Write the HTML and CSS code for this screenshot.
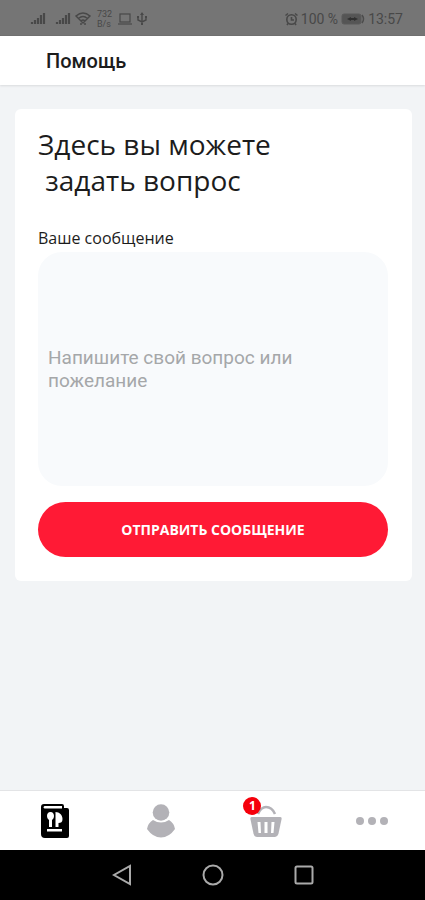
FILE: index.html
```html
<!DOCTYPE html>
<html lang="ru">
<head>
<meta charset="utf-8">
<meta name="viewport" content="width=device-width, initial-scale=1">
<title>Помощь</title>
<link rel="stylesheet" href="styles.css">
</head>
<body>
<div class="status">
  <div class="status-group">
    <svg width="17" height="16" viewBox="0 0 17 16"><path d="M2 13v-2M5 13v-4M8 13V7M11 13V4M14 13V2" stroke="currentColor" stroke-width="2.200"/></svg>
    <svg class="signal-second" width="17" height="16" viewBox="0 0 17 16"><path d="M2 13v-2M5 13v-4M8 13V7M11 13V4M14 13V2" stroke="currentColor" stroke-width="2.200"/></svg>
    <svg width="16" height="16" viewBox="0 0 16 16" fill="none" stroke="currentColor" stroke-width="1.500"><path d="M1 5Q8-1 15 5L8 12zM3.500 7.500Q8 3.500 12.500 7.500M6 10Q8 8 10 10"/><path d="M6 12v2M10 12v2"/></svg>
    <div class="speed"><span>732</span><span>B/s</span></div>
    <svg width="14" height="16" viewBox="0 0 14 16" fill="none" stroke="currentColor" stroke-width="1.200"><rect x="2" y="3" width="10" height="8"/><path d="M0 13h14"/></svg>
    <svg class="usb" width="10" height="16" viewBox="0 0 10 16" fill="none" stroke="currentColor" stroke-width="1.400"><path d="M5 3v10M1 6v3l4 2 4-2V6"/><path d="M5 1l2 3H3zM0 5h2v2H0zM8 5h2v2H8zM4 12h2v2H4z" fill="currentColor" stroke="none"/></svg>
  </div>
  <div class="status-group status-right">
    <svg width="13" height="14" viewBox="0 0 13 14" fill="none" stroke="currentColor" stroke-width="1.600"><circle cx="6.500" cy="7.500" r="4.700"/><path d="M.5 3.500L3 1.500M12.500 3.500L10 1.500M6.500 5v3H9M3 11.500l-1 1.500M10 11.500l1 1.500"/></svg>
    <span>100 %</span>
    <svg class="battery" width="24" height="12" viewBox="0 0 24 12"><rect x="1" y="1" width="19" height="10" rx="2" fill="#555" stroke="#5a5a5a"/><path d="M21 2q3 4 0 8" fill="none" stroke="#4c4c4c" stroke-width="1.500"/><path d="M6 6l4-2v1h3V4l4 2-4 2V7h-3v1z" fill="#303030"/></svg>
    <span>13:57</span>
  </div>
</div>
<header class="header"><h1>Помощь</h1></header>
<main class="main">
  <form class="card">
    <h2>Здесь вы можете<br>&nbsp;задать вопрос</h2>
    <label for="message">Ваше сообщение</label>
    <textarea id="message" placeholder="Напишите свой вопрос или пожелание"></textarea>
    <button class="submit" type="button">ОТПРАВИТЬ СООБЩЕНИЕ</button>
  </form>
</main>
<nav class="tabs">
  <a href="#menu" aria-label="Меню">
    <svg width="28" height="34" viewBox="0 0 28 34"><path d="M3 0h18q2 0 2 2v2h3q2 0 2 2v26q0 2-2 2H4q-4 0-4-4V3q0-3 3-3z" fill="#000"/><path d="M3.500 2H21v2.500H3.500q-2-1.200 0-2.500z" fill="#fff"/><path d="M6 25h15v2.500H6zM9.500 8C12 8 13 10 13 12c0 2-1 3-2 4v7H8v-7c-1-1-2-2-2-4 0-2 1-4 3.500-4zM14.500 8c4 0 7 3 7 7 0 3-1.500 4-4 4v4h-3z" fill="#fff"/></svg>
  </a>
  <a href="#profile" aria-label="Профиль">
    <svg width="28" height="34" viewBox="0 0 28 34" fill="#b3b2b7"><circle cx="14" cy="8.500" r="8.300"/><path d="M6 16q8 5 16 0 5 3 6 9-6 8.500-14 8.500T0 25q1-6 6-9z"/></svg>
  </a>
  <a href="#cart" aria-label="Корзина">
    <span class="cart">
      <svg width="32" height="34" viewBox="0 0 32 34"><path d="M8 10Q11 3 16 3q6 0 9 7" fill="none" stroke="#b3b2b7" stroke-width="2.500"/><path d="M2 13h28q2 0 1.600 2l-3.200 15q-1 3-3.400 3H7q-2.400 0-3.400-3L.4 15Q0 13 2 13z" fill="#b3b2b7"/><path d="M7.500 18h3l.5 11H8.500zM14.500 18h3v11h-3zM21.500 18h3l-1 11H21z" fill="#fff"/></svg>
      <span class="badge">1</span>
    </span>
  </a>
  <a href="#more" aria-label="Ещё">
    <svg width="32" height="34" viewBox="0 0 32 34" fill="#b3b2b7"><circle cx="4" cy="17" r="4"/><circle cx="16" cy="17" r="4"/><circle cx="28" cy="17" r="4"/></svg>
  </a>
</nav>
<div class="system">
  <button type="button" aria-label="Назад"><svg width="20" height="22" viewBox="0 0 20 22"><path d="M18 2v18L2 11z"/></svg></button>
  <button type="button" aria-label="Домой"><svg width="22" height="22" viewBox="0 0 22 22"><circle cx="11" cy="11" r="9.500"/></svg></button>
  <button type="button" aria-label="Недавние"><svg width="20" height="22" viewBox="0 0 20 22"><rect x="1.500" y="2.500" width="17" height="17" rx="1.500"/></svg></button>
</div>
</body>
</html>
```
FILE: styles.css
```css
* {
  box-sizing: border-box;
}

body {
  margin: 0;
  min-height: 100vh;
  display: flex;
  flex-direction: column;
  background: #f2f4f6;
  color: #1c1c1c;
  font-family: "Open Sans", sans-serif;
}

svg {
  display: block;
  flex: none;
}

.status {
  height: 36px;
  padding: 2px 22px 0 30px;
  display: flex;
  align-items: center;
  justify-content: space-between;
  background: #757575;
  border-bottom: 1px solid #686868;
  color: #484848;
  font: 14px/16px Roboto, sans-serif;
}

.status-group {
  display: flex;
  align-items: center;
  gap: 3px;
}

.signal-second {
  margin-left: 5px;
}

.speed {
  display: flex;
  flex-direction: column;
  margin: 0 3px;
  font-size: 9px;
  line-height: 10px;
}

.usb {
  margin-left: 2px;
}

.header {
  height: 49px;
  padding: 0 46px;
  display: flex;
  align-items: center;
  background: #fff;
  box-shadow: 0 1px 2px #d9dbdd;
}

h1 {
  margin: 0;
  font: 500 20px/24px Roboto, sans-serif;
}

.main {
  flex: 1;
  padding: 24px 13px 24px 15px;
}

.card {
  padding: 17px 24px 24px 23px;
  display: flex;
  flex-direction: column;
  background: #fff;
  border-radius: 6px;
}

h2 {
  margin: 0 0 28px;
  font-size: 28px;
  font-weight: 400;
  line-height: 36px;
}

label {
  font-size: 16px;
  line-height: 24px;
}

textarea {
  height: 234px;
  margin: 2px 0 16px;
  padding: 94px 60px 24px 10px;
  border: 0;
  border-radius: 24px;
  background: #f8fafc;
  color: #1c1c1c;
  font: 19px/23px Roboto, sans-serif;
  resize: none;
}

textarea::placeholder {
  color: #a5a7a9;
}

.submit {
  height: 55px;
  border: 0;
  border-radius: 28px;
  background: #ff1a35;
  color: #fff;
  font: 700 14px/20px "Open Sans", sans-serif;
}

.tabs {
  height: 60px;
  display: grid;
  grid-template-columns: repeat(4, 1fr);
  padding-left: 2px;
  background: #fff;
  border-top: 1px solid #e3e4e6;
}

.tabs a {
  display: flex;
  align-items: center;
  justify-content: center;
}

.cart {
  position: relative;
}

.badge {
  position: absolute;
  top: -7px;
  left: -7px;
  width: 18px;
  height: 18px;
  border-radius: 50%;
  background: #f5000b;
  color: #fff;
  font: 700 12px/18px "Open Sans", sans-serif;
  text-align: center;
}

.system {
  height: 50px;
  display: flex;
  align-items: center;
  justify-content: center;
  gap: 70px;
  background: #000;
}

.system button {
  padding: 0;
  border: 0;
  background: none;
}

.system svg {
  fill: none;
  stroke: #aaa;
  stroke-width: 2;
}
```
